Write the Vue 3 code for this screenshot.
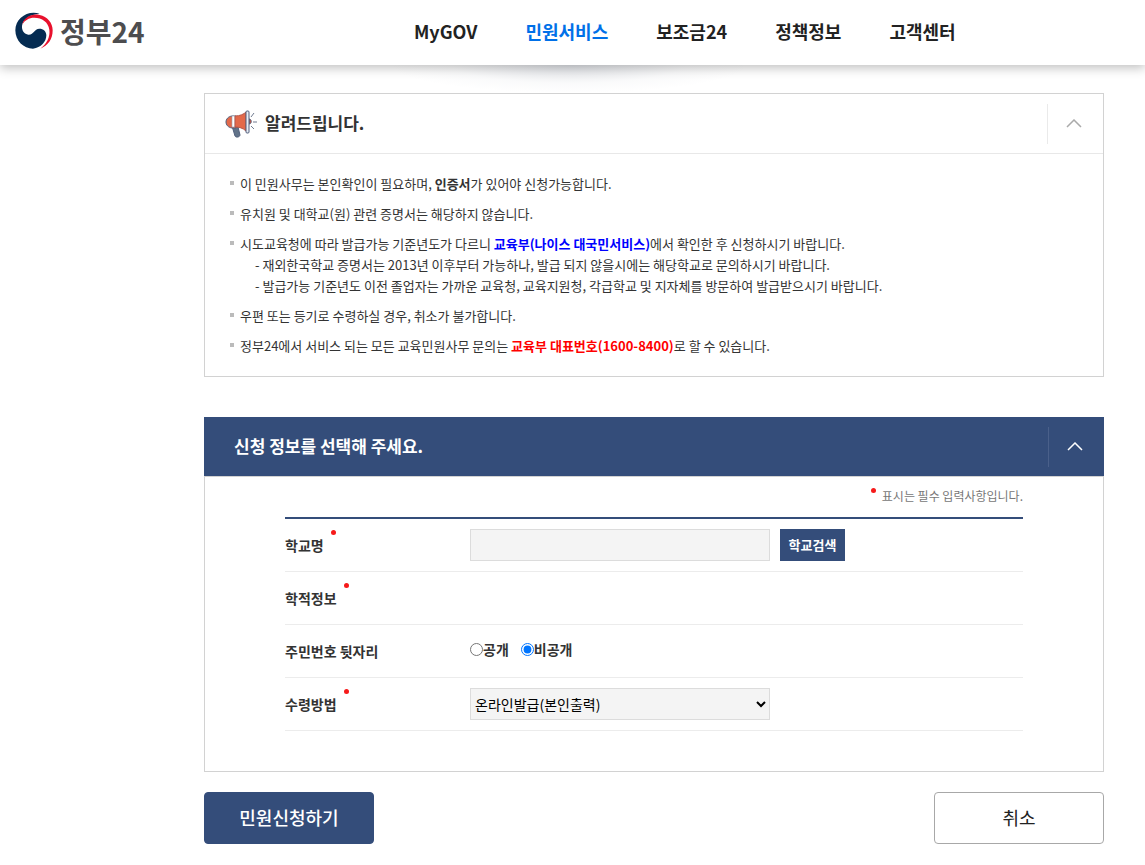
<script setup>
import { ref } from 'vue'

const menu = [
  { label: 'MyGOV' },
  { label: '민원서비스', active: true },
  { label: '보조금24' },
  { label: '정책정보' },
  { label: '고객센터' },
]

const noticeOpen = ref(true)
const formOpen = ref(true)
const school = ref('')
const disclosure = ref('private')
const method = ref('online')
</script>

<template>
  <div class="page">
    <header class="top">
      <a class="logo" href="#" aria-label="정부24">
        <svg viewBox="44 37 114 111" width="38" height="37" aria-hidden="true">
          <path fill="#052c52" d="M118 42C83 30 45 55 45 92C45 124 70 147 98 147C122 145 138 126 138 107C138 95 129 87 117 87C101 87 101 106 84 105C71 104 64 92 65 79C67 57 90 44 118 42Z" />
          <path fill="#e8112d" d="M66 75C70 53 94 41 118 46C141 50 157 70 157 92C157 119 143 138 120 147C139 132 150 112 147 90C144 67 125 54 102 54C86 54 72 62 66 75Z" />
        </svg>
        <span>정부24</span>
      </a>
      <nav class="menu" aria-label="주 메뉴">
        <a v-for="item in menu" :key="item.label" href="#" :class="{ active: item.active }">{{ item.label }}</a>
      </nav>
    </header>

    <main class="content">
      <section class="panel">
        <div class="panel-head">
          <svg class="horn" viewBox="0 0 32 28" width="32" height="28" aria-hidden="true">
            <path d="M7 16l3 10c1 2 5 1 5-1l-2-8z" fill="#627389" stroke="#515f7c" />
            <path d="M7 6h4v12H7C-1 17-1 7 7 6z" fill="#e3694a" stroke="#515f7c" />
            <path d="M7 6h3v11H7z" fill="#fff" stroke="#9aa1b0" stroke-width=".6" />
            <path d="M10 6c5 0 9-2 11-4v19c-3-3-7-4-11-4z" fill="#e3694a" stroke="#b4574a" />
            <path d="M24 9c3 0 3 5 0 5z" fill="#d9543c" stroke="#515f7c" />
            <rect x="21" y="1" width="3" height="22" rx="1" fill="#e8edf5" stroke="#515f7c" />
            <path d="M26 7l3-4M28 12h4M26 16l3 3" fill="none" stroke="#707b90" />
          </svg>
          <h2>알려드립니다.</h2>
          <button type="button" class="toggle" aria-label="안내 접기" :aria-expanded="noticeOpen" @click="noticeOpen = !noticeOpen">
            <svg viewBox="0 0 16 10" width="16" height="10" aria-hidden="true"><path d="M1 8l7-7 7 7" /></svg>
          </button>
        </div>
        <ul v-show="noticeOpen" class="notice">
          <li>이 민원사무는 본인확인이 필요하며, <strong>인증서</strong>가 있어야 신청가능합니다.</li>
          <li>유치원 및 대학교(원) 관련 증명서는 해당하지 않습니다.</li>
          <li>
            시도교육청에 따라 발급가능 기준년도가 다르니 <a href="#">교육부(나이스 대국민서비스)</a>에서 확인한 후 신청하시기 바랍니다.
            <p>- 재외한국학교 증명서는 2013년 이후부터 가능하나, 발급 되지 않을시에는 해당학교로 문의하시기 바랍니다.</p>
            <p>- 발급가능 기준년도 이전 졸업자는 가까운 교육청, 교육지원청, 각급학교 및 지자체를 방문하여 발급받으시기 바랍니다.</p>
          </li>
          <li>우편 또는 등기로 수령하실 경우, 취소가 불가합니다.</li>
          <li>정부24에서 서비스 되는 모든 교육민원사무 문의는 <strong class="phone">교육부 대표번호(1600-8400)</strong>로 할 수 있습니다.</li>
        </ul>
      </section>

      <form @submit.prevent>
        <section class="panel form-panel">
          <div class="panel-head dark">
            <h2>신청 정보를 선택해 주세요.</h2>
            <button type="button" class="toggle" aria-label="신청 정보 접기" :aria-expanded="formOpen" @click="formOpen = !formOpen">
              <svg viewBox="0 0 16 10" width="16" height="10" aria-hidden="true"><path d="M1 8l7-7 7 7" /></svg>
            </button>
          </div>
          <div v-show="formOpen" class="form-body">
            <p class="required-note"><i class="dot"></i>표시는 필수 입력사항입니다.</p>
            <div class="rows">
              <div class="row">
                <label class="name" for="school">학교명<i class="dot"></i></label>
                <div class="field">
                  <input id="school" v-model="school" class="box" type="text" readonly>
                  <button type="button" class="search">학교검색</button>
                </div>
              </div>
              <div class="row">
                <span class="name">학적정보<i class="dot"></i></span>
              </div>
              <div class="row" role="radiogroup" aria-labelledby="disclosure-name">
                <span id="disclosure-name" class="name">주민번호 뒷자리</span>
                <div class="radios">
                  <label><input v-model="disclosure" type="radio" name="disclosure" value="public">공개</label>
                  <label><input v-model="disclosure" type="radio" name="disclosure" value="private">비공개</label>
                </div>
              </div>
              <div class="row">
                <label class="name" for="method">수령방법<i class="dot"></i></label>
                <div class="field">
                  <select id="method" v-model="method" class="box">
                    <option value="online">온라인발급(본인출력)</option>
                  </select>
                </div>
              </div>
            </div>
          </div>
        </section>

        <div class="actions">
          <button type="submit" class="action primary">민원신청하기</button>
          <button type="button" class="action">취소</button>
        </div>
      </form>
    </main>
  </div>
</template>

<style>
body {
  margin: 0;
  background: #fff;
}
</style>

<style scoped>
* {
  box-sizing: border-box;
}
.page {
  color: #333;
  font-family: "Noto Sans CJK KR", "Noto Sans", sans-serif;
  font-size: 14px;
  line-height: 21px;
}
button,
input,
select {
  margin: 0;
  font-family: inherit;
}
a {
  text-decoration: none;
}
h2,
p,
ul {
  margin: 0;
  padding: 0;
}

.top {
  position: relative;
  display: flex;
  align-items: center;
  height: 65px;
  padding: 0 15px 4px;
  background: #fff;
  box-shadow: 0 3px 10px rgba(0, 0, 0, 0.25);
}
.top::after {
  content: "";
  position: absolute;
  top: 100%;
  left: 50%;
  width: 360px;
  height: 28px;
  margin-left: -184px;
  background: radial-gradient(ellipse 50% 100% at top, rgba(90, 100, 120, 0.2), rgba(90, 100, 120, 0.12) 30%, rgba(90, 100, 120, 0.03) 65%, transparent);
}
.logo {
  display: flex;
  align-items: center;
  gap: 7px;
  width: 399px;
  color: #4d4d4f;
  font-size: 28px;
  font-weight: 700;
  line-height: 40px;
}
.menu {
  display: flex;
  gap: 48px;
}
.menu a {
  color: #222;
  font-size: 18px;
  font-weight: 700;
  line-height: 28px;
}
.menu a.active {
  color: #0070e8;
}

.content {
  padding: 28px 41px 20px 204px;
}
.panel {
  border: 1px solid #d2d2d2;
}
.panel-head {
  display: flex;
  align-items: center;
  height: 60px;
  padding-left: 20px;
  border-bottom: 1px solid #e8e8e8;
}
.panel-head h2 {
  flex: 1;
  padding-bottom: 2px;
  font-size: 17px;
  font-weight: 700;
  line-height: 26px;
}
.horn {
  margin-right: 8px;
}
.toggle {
  display: flex;
  align-items: center;
  justify-content: center;
  width: 56px;
  height: 40px;
  padding: 0 4px 0 0;
  border: 0;
  border-left: 1px solid #eaeaea;
  background: none;
}
.toggle path {
  fill: none;
  stroke: #aaa;
  stroke-width: 1.5;
}

.notice {
  padding: 19px 20px 20px 25px;
  font-size: 13px;
  list-style: none;
}
.notice li {
  position: relative;
  padding-left: 10px;
}
.notice li + li {
  margin-top: 9px;
}
.notice li::before {
  content: "";
  position: absolute;
  top: 8px;
  left: 0;
  width: 4px;
  height: 4px;
  background: #bbb;
}
.notice p {
  padding-left: 15px;
}
.notice a {
  color: #00f;
  font-weight: 700;
}
.notice .phone {
  color: #f00;
}

.form-panel {
  margin-top: 40px;
  border-top: 0;
}
.dark {
  margin: 0 -1px;
  padding-left: 30px;
  border-bottom-color: #d2d2d2;
  background: #344d7a;
  background-clip: padding-box;
  color: #fff;
}
.dark .toggle {
  border-left-color: #4a608a;
}
.dark .toggle path {
  stroke: #fff;
}
.form-body {
  padding: 0 80px 40px;
}
.required-note {
  padding: 8px 0 11px;
  color: #777;
  font-size: 12px;
  text-align: right;
}
.dot {
  display: inline-block;
  width: 5px;
  height: 5px;
  border-radius: 50%;
  background: #f61a1a;
  vertical-align: 8px;
}
.required-note .dot {
  margin-right: 6px;
}
.rows {
  border-top: 2px solid #344d7a;
}
.row {
  display: flex;
  align-items: center;
  height: 53px;
  border-bottom: 1px solid #ececec;
}
.name {
  display: flex;
  align-items: center;
  width: 185px;
  font-weight: 700;
}
.name .dot {
  margin: 0 0 26px 7px;
}
.field {
  display: flex;
  gap: 10px;
}
.box {
  width: 300px;
  height: 32px;
  border: 1px solid #dcdcdc;
  border-radius: 0;
  background: #f4f4f4;
  color: #000;
  font-size: 14px;
}
.search {
  width: 65px;
  height: 32px;
  padding: 0 0 2px;
  border: 0;
  background: #344d7a;
  color: #fff;
  font-size: 13px;
  font-weight: 700;
}
.radios {
  display: flex;
  gap: 12px;
  padding-bottom: 4px;
}
.radios label {
  display: flex;
  align-items: center;
  font-weight: 700;
}

.actions {
  display: flex;
  justify-content: space-between;
  margin-top: 20px;
}
.action {
  width: 170px;
  height: 52px;
  padding: 0 0 2px;
  border: 1px solid #a8a8a8;
  border-radius: 4px;
  background: #fff;
  color: #222;
  font-size: 18px;
}
.action.primary {
  border-color: #344d7a;
  background: #344d7a;
  color: #fff;
  font-weight: 500;
}
</style>
